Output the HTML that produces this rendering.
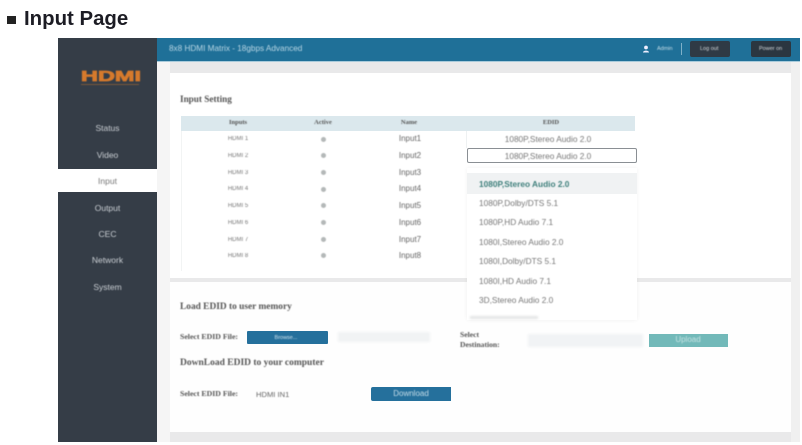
<!DOCTYPE html>
<html>
<head>
<meta charset="utf-8">
<style>
html,body{margin:0;padding:0;background:#fff}
body{width:802px;height:445px;position:relative;overflow:hidden;font-family:"Liberation Sans",sans-serif}
div{position:absolute;white-space:nowrap;box-sizing:border-box}
.t{filter:blur(.5px)}
.nav{left:58px;width:99px;text-align:center;color:#c9ced3;font-size:8.5px;line-height:12px}
.c{text-align:center;transform:translateX(-50%);color:#666;line-height:10px}
.h{font-family:"Liberation Serif",serif;color:#555;font-size:6.5px;font-weight:bold}
.i{font-size:6px;color:#777}
.r{width:5px;height:5px;border-radius:50%;background:#b4b8b8;left:321px;filter:blur(.4px)}
.n{font-size:8px;color:#666}
.o{left:479px;font-size:8.3px;color:#777;line-height:10px}
.s{font-family:"Liberation Serif",serif;color:#555;font-weight:bold}
</style>
</head>
<body>
<div style="left:7px;top:16px;width:9px;height:8px;background:#222"></div>
<div style="left:24px;top:7px;font-size:20.4px;line-height:24px;font-weight:bold;color:#1c1c24">Input Page</div>

<div style="left:58px;top:38px;width:742px;height:404px;background:#e9e9ea"></div>
<div style="left:58px;top:38px;width:99px;height:404px;background:#353d47"></div>
<div style="left:157px;top:38px;width:643px;height:23px;background:#1f7098"></div>
<div style="left:157px;top:61px;width:643px;height:1px;background:#a9cbdb"></div>
<div style="left:157px;top:62px;width:13px;height:380px;background:#f5f5f5"></div>

<div style="left:170px;top:73px;width:621px;height:205px;background:#fff"></div>
<div style="left:170px;top:282px;width:621px;height:150px;background:#fefefe"></div>
<div style="left:791px;top:62px;width:9px;height:380px;background:#f0f0f0"></div>

<!-- Sidebar -->
<svg style="position:absolute;left:80px;top:67px;filter:blur(.4px)" width="64" height="20">
<text x="1" y="14" textLength="60" lengthAdjust="spacingAndGlyphs" font-family="Liberation Sans" font-weight="bold" font-size="15" fill="#d67a2c" stroke="#d67a2c" stroke-width=".8">HDMI</text>
<rect x="1" y="17" width="58" height="1" fill="#7a5a3c"/>
</svg>
<div class="nav t" style="top:122px">Status</div>
<div class="nav t" style="top:149px">Video</div>
<div style="left:58px;top:169px;width:99px;height:23px;background:#fff"></div>
<div class="nav t" style="top:175px;color:#777">Input</div>
<div class="nav t" style="top:202px">Output</div>
<div class="nav t" style="top:228px">CEC</div>
<div class="nav t" style="top:254px">Network</div>
<div class="nav t" style="top:281px">System</div>

<!-- Header -->
<div class="t" style="left:169px;top:43px;font-size:8.2px;line-height:12px;color:#b8d6e4">8x8 HDMI Matrix - 18gbps Advanced</div>
<svg style="position:absolute;left:642px;top:45px" width="8" height="8"><circle cx="4" cy="2.5" r="1.9" fill="#eef"/><path d="M1 7.5C1 5 7 5 7 7.5Z" fill="#eef"/></svg>
<div class="t" style="left:657px;top:44px;font-size:5.5px;line-height:10px;color:#c8dfe9">Admin</div>
<div style="left:681px;top:43px;width:1px;height:12px;background:#7fb0c8"></div>
<div style="left:690px;top:41px;width:40px;height:16px;background:#2f3a45;border-radius:2px"></div>
<div class="t" style="left:700px;top:44px;font-size:5.5px;line-height:10px;color:#d5d8db">Log out</div>
<div style="left:751px;top:41px;width:40px;height:16px;background:#2b3640;border-radius:2px"></div>
<div class="t" style="left:759px;top:44px;font-size:5.5px;line-height:10px;color:#d5d8db">Power on</div>

<!-- Input setting -->
<div class="s t" style="left:180px;top:93px;font-size:9.2px;line-height:12px">Input Setting</div>
<div style="left:181px;top:116px;width:454px;height:15px;background:#dbe8ed"></div>
<div class="c h t" style="left:238px;top:118px">Inputs</div>
<div class="c h t" style="left:323px;top:118px">Active</div>
<div class="c h t" style="left:409px;top:118px">Name</div>
<div class="c h t" style="left:551px;top:118px">EDID</div>
<div style="left:181px;top:131px;width:1px;height:140px;background:#f2f4f4"></div>
<div style="left:466px;top:131px;width:1px;height:17px;background:#eef1f2"></div>

<div class="c i t" style="left:238px;top:134px">HDMI 1</div><div class="r" style="top:137px"></div><div class="c n t" style="left:410px;top:134px">Input1</div>
<div class="c i t" style="left:238px;top:151px">HDMI 2</div><div class="r" style="top:153px"></div><div class="c n t" style="left:410px;top:151px">Input2</div>
<div class="c i t" style="left:238px;top:168px">HDMI 3</div><div class="r" style="top:170px"></div><div class="c n t" style="left:410px;top:168px">Input3</div>
<div class="c i t" style="left:238px;top:184px">HDMI 4</div><div class="r" style="top:187px"></div><div class="c n t" style="left:410px;top:184px">Input4</div>
<div class="c i t" style="left:238px;top:201px">HDMI 5</div><div class="r" style="top:203px"></div><div class="c n t" style="left:410px;top:201px">Input5</div>
<div class="c i t" style="left:238px;top:218px">HDMI 6</div><div class="r" style="top:220px"></div><div class="c n t" style="left:410px;top:218px">Input6</div>
<div class="c i t" style="left:238px;top:235px">HDMI 7</div><div class="r" style="top:237px"></div><div class="c n t" style="left:410px;top:235px">Input7</div>
<div class="c i t" style="left:238px;top:251px">HDMI 8</div><div class="r" style="top:253px"></div><div class="c n t" style="left:410px;top:251px">Input8</div>

<div class="c t" style="left:548px;top:134px;font-size:8.3px;color:#777">1080P,Stereo Audio 2.0</div>
<div style="left:467px;top:148px;width:170px;height:15px;border:1px solid #8a8f94;border-radius:2px;background:#fff"></div>
<div class="c t" style="left:548px;top:151px;font-size:8.3px;color:#777">1080P,Stereo Audio 2.0</div>

<!-- Dropdown -->
<div style="left:467px;top:168px;width:170px;height:152px;background:#fff;box-shadow:0 0 4px rgba(0,0,0,.06)"></div>
<div style="left:467px;top:173px;width:170px;height:21px;background:#f0f2f3"></div>
<div class="o t" style="top:179px;font-weight:bold;color:#3e7f7b">1080P,Stereo Audio 2.0</div>
<div class="o t" style="top:198px">1080P,Dolby/DTS 5.1</div>
<div class="o t" style="top:217px">1080P,HD Audio 7.1</div>
<div class="o t" style="top:237px">1080I,Stereo Audio 2.0</div>
<div class="o t" style="top:256px">1080I,Dolby/DTS 5.1</div>
<div class="o t" style="top:276px">1080I,HD Audio 7.1</div>
<div class="o t" style="top:295px">3D,Stereo Audio 2.0</div>
<div style="left:470px;top:316px;width:68px;height:3px;background:#e4e5e6;filter:blur(1px)"></div>

<!-- Load EDID -->
<div class="s t" style="left:180px;top:301px;font-size:9.4px;line-height:12px">Load EDID to user memory</div>
<div class="s t" style="left:180px;top:331px;font-size:7.8px;line-height:12px">Select EDID File:</div>
<div style="left:247px;top:331px;width:81px;height:13px;background:#25709c;border-radius:1px"></div>
<div class="c t" style="left:286px;top:333px;font-size:5.5px;color:#cfe2ec">Browse...</div>
<div style="left:338px;top:332px;width:92px;height:10px;background:#f1f3f4;filter:blur(1px)"></div>
<div class="t" style="left:460px;top:330px;font-size:7.6px;line-height:9.5px;color:#555;font-family:'Liberation Serif',serif;font-weight:bold">Select<br>Destination:</div>
<div style="left:528px;top:334px;width:115px;height:13px;background:#f1f3f5;filter:blur(1px)"></div>
<div style="left:649px;top:334px;width:79px;height:13px;background:#72b9b9"></div>
<div class="c t" style="left:688px;top:335px;font-size:8px;color:#c6e3e3">Upload</div>

<div class="s t" style="left:180px;top:357px;font-size:9.5px;line-height:12px">DownLoad EDID to your computer</div>
<div class="s t" style="left:180px;top:388px;font-size:7.8px;line-height:12px">Select EDID File:</div>
<div class="t" style="left:256px;top:389px;font-size:7.6px;line-height:11px;color:#666">HDMI IN1</div>
<div style="left:371px;top:387px;width:80px;height:14px;background:#25709c;border-radius:2px 0 0 2px"></div>
<div class="c t" style="left:411px;top:389px;font-size:8px;color:#c4dce8">Download</div>
</body>
</html>
